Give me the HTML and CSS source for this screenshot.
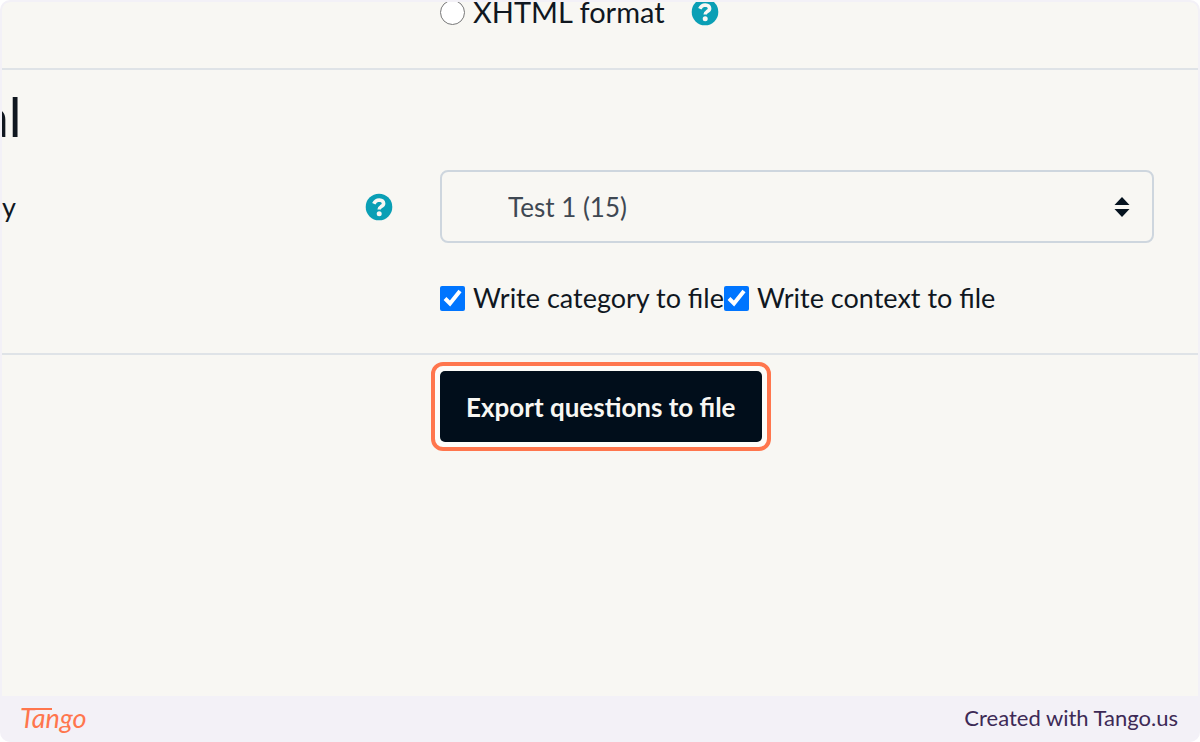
FILE: index.html
```
<!DOCTYPE html>
<html lang="en">
<head>
<meta charset="utf-8">
<title>Export questions</title>
<link rel="stylesheet" href="styles.css">
</head>
<body>
<div class="card">
  <main class="view">
    <section class="section section-format">
      <div class="row row-format">
        <label class="choice"><input class="radio" type="radio" name="format"><span>XHTML format</span></label>
        <button class="help" type="button" aria-label="Help"><svg viewBox="0 0 28 28"><circle cx="14" cy="14" r="13.3" fill="#0a9fb5"/><path d="M8.8 10.8Q10.5 7 14.2 7Q18.6 7.2 18.6 10.6Q18.6 12.4 16 13.7Q14.2 14.7 14.2 16.6" fill="none" stroke="#f8f7f3" stroke-width="3.6"/><circle cx="14.2" cy="20.8" r="2.5" fill="#f8f7f3"/></svg></button>
      </div>
    </section>
    <section class="section section-general">
      <h2 class="heading">al</h2>
      <div class="field">
        <div class="field-label">
          <label for="category">y</label>
          <button class="help" type="button" aria-label="Help"><svg viewBox="0 0 28 28"><circle cx="14" cy="14" r="13.3" fill="#0a9fb5"/><path d="M8.8 10.8Q10.5 7 14.2 7Q18.6 7.2 18.6 10.6Q18.6 12.4 16 13.7Q14.2 14.7 14.2 16.6" fill="none" stroke="#f8f7f3" stroke-width="3.6"/><circle cx="14.2" cy="20.8" r="2.5" fill="#f8f7f3"/></svg></button>
        </div>
        <div class="select-wrap">
          <select class="select" id="category"><option>Test 1 (15)</option></select>
          <svg class="arrows" viewBox="0 0 16 20"><path d="M0.5 8 8 0 15.5 8ZM0.5 12 8 20 15.5 12Z" fill="#06131f"/></svg>
        </div>
      </div>
      <div class="row row-checks">
        <label class="choice"><input class="check" type="checkbox" checked><span>Write category to file</span></label>
        <label class="choice"><input class="check" type="checkbox" checked><span>Write context to file</span></label>
      </div>
    </section>
    <div class="row row-action">
      <div class="highlight"><button class="submit" type="button">Export questions to file</button></div>
    </div>
  </main>
  <footer class="footer">
    <div class="logo">Tango<svg class="logo-bar" viewBox="0 0 30 2"><path d="M0 1H30" stroke="#ff764d" stroke-width="2"/></svg></div>
    <a class="credit" href="#">Created with Tango.us</a>
  </footer>
</div>
</body>
</html>
```
FILE: styles.css
```
* {
  box-sizing: border-box;
}

body {
  margin: 0;
  background: #ffffff;
  color: #10171f;
  font-family: Lato, "Liberation Sans", sans-serif;
  font-size: 27px;
  line-height: 36px;
}

.card {
  display: flex;
  flex-direction: column;
  min-height: 100vh;
  overflow: hidden;
  border: 2px solid #f3f1f7;
  border-bottom: 0;
  border-radius: 10px;
  background: #f3f1f7;
}

.view {
  flex: 1;
  overflow: hidden;
  border-radius: 8px 8px 0 0;
  background: #f8f7f3;
}

.section {
  border-bottom: 2px solid #dfe3e7;
}

.row {
  display: flex;
  align-items: center;
  padding-left: 438px;
}

.row-format {
  gap: 26px;
  margin-top: -8px;
  padding-bottom: 38px;
  font-size: 29px;
}

.choice {
  display: flex;
  align-items: center;
  gap: 8px;
  white-space: nowrap;
}

.radio,
.check {
  flex: none;
  width: 25px;
  height: 25px;
  margin: 0;
}

.check {
  accent-color: #0075ff;
}

.help {
  flex: none;
  width: 28px;
  height: 28px;
  padding: 0;
  border: 0;
  background: none;
}

.help svg {
  display: block;
}

.heading {
  margin: 0 0 0 -20px;
  padding: 17px 0 23px;
  font-size: 54px;
  font-weight: 400;
  line-height: 60px;
}

.field {
  display: grid;
  grid-template-columns: 438px 1fr;
  align-items: center;
  padding-right: 44px;
}

.field-label {
  display: flex;
  align-items: center;
  justify-content: space-between;
  padding-right: 47px;
}

.select-wrap {
  position: relative;
}

.select {
  display: block;
  width: 100%;
  height: 73px;
  padding: 0 66px;
  border: 2px solid #ced6de;
  border-radius: 8px;
  appearance: none;
  background: transparent;
  color: #3f4852;
  font: inherit;
  font-size: 26px;
}

.arrows {
  position: absolute;
  top: 27px;
  right: 24px;
  width: 16px;
  height: 20px;
  pointer-events: none;
}

.row-checks {
  padding-top: 37px;
  padding-bottom: 37px;
}

.row-action {
  padding-top: 7px;
}

.highlight {
  margin-left: -9px;
  padding: 5px;
  border: 4px solid #ff764d;
  border-radius: 12px;
  background: #fdfcf9;
}

.submit {
  display: block;
  height: 71px;
  padding: 0 26px;
  border: 0;
  border-radius: 5px;
  background: #010e1b;
  color: #f8f7f3;
  font: inherit;
  font-size: 26px;
  font-weight: 700;
}

.footer {
  display: flex;
  align-items: center;
  justify-content: space-between;
  height: 46px;
  padding: 0 20px 2px 18px;
}

.logo {
  position: relative;
  color: #ff764d;
  font-size: 27px;
  font-style: italic;
  font-weight: 400;
}

.logo-bar {
  position: absolute;
  top: 8px;
  left: 2px;
  width: 30px;
  height: 2px;
}

.credit {
  color: #3d2a56;
  font-size: 22px;
  text-decoration: none;
}
```
